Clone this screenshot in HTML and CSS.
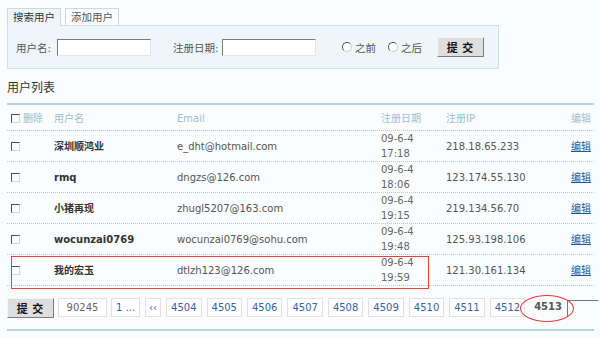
FILE: index.html
```html
<!DOCTYPE html>
<html lang="zh-CN">
<head>
    <meta charset="UTF-8">
    <title>用户管理</title>
    <link rel="stylesheet" href="styles.css">
</head>
<body>

<div class="tabs">
    <span class="tab active">搜索用户</span>
    <span class="tab">添加用户</span>
</div>

<form class="search-panel">
    <label class="lbl lbl-name">用户名:</label>
    <input type="text" class="txt">
    <label class="lbl lbl-date">注册日期:</label>
    <input type="text" class="txt">
    <span class="radio r-before"><i></i>之前</span>
    <span class="radio r-after"><i></i>之后</span>
    <button type="button" class="btn">提 交</button>
</form>

<h2 class="list-title">用户列表</h2>

<div class="user-list">
    <div class="row head">
        <div class="c-check"><span class="box"></span>删除</div>
        <div>用户名</div>
        <div>Email</div>
        <div>注册日期</div>
        <div>注册IP</div>
        <div class="c-edit">编辑</div>
    </div>
    <div class="row">
        <div class="c-check"><span class="box"></span></div>
        <div class="c-name">深圳顺鸿业</div>
        <div class="c-mail">e_dht@hotmail.com</div>
        <div class="c-date">09-6-4<br>17:18</div>
        <div class="c-ip">218.18.65.233</div>
        <div class="c-edit"><a href="#">编辑</a></div>
    </div>
    <div class="row">
        <div class="c-check"><span class="box"></span></div>
        <div class="c-name">rmq</div>
        <div class="c-mail">dngzs@126.com</div>
        <div class="c-date">09-6-4<br>18:06</div>
        <div class="c-ip">123.174.55.130</div>
        <div class="c-edit"><a href="#">编辑</a></div>
    </div>
    <div class="row">
        <div class="c-check"><span class="box"></span></div>
        <div class="c-name">小猪再现</div>
        <div class="c-mail">zhugl5207@163.com</div>
        <div class="c-date">09-6-4<br>19:15</div>
        <div class="c-ip">219.134.56.70</div>
        <div class="c-edit"><a href="#">编辑</a></div>
    </div>
    <div class="row">
        <div class="c-check"><span class="box"></span></div>
        <div class="c-name">wocunzai0769</div>
        <div class="c-mail">wocunzai0769@sohu.com</div>
        <div class="c-date">09-6-4<br>19:48</div>
        <div class="c-ip">125.93.198.106</div>
        <div class="c-edit"><a href="#">编辑</a></div>
    </div>
    <div class="row marked">
        <div class="c-check"><span class="box"></span></div>
        <div class="c-name">我的宏玉</div>
        <div class="c-mail">dtlzh123@126.com</div>
        <div class="c-date">09-6-4<br>19:59</div>
        <div class="c-ip">121.30.161.134</div>
        <div class="c-edit"><a href="#">编辑</a></div>
        <span class="red-box"></span>
    </div>
</div>

<div class="pager">
    <button type="button" class="btn">提 交</button>
    <span class="pg total">90245</span>
    <span class="pg">1 ...</span>
    <span class="pg prev">‹‹</span>
    <span class="pg">4504</span>
    <span class="pg">4505</span>
    <span class="pg">4506</span>
    <span class="pg">4507</span>
    <span class="pg">4508</span>
    <span class="pg">4509</span>
    <span class="pg">4510</span>
    <span class="pg">4511</span>
    <span class="pg">4512</span>
    <span class="pg current">4513<span class="red-ring"></span></span>
    <input type="text" class="pg-input">
</div>

<div class="bottom-line"></div>

</body>
</html>
```

FILE: styles.css
```css
body {
    margin: 0;
    padding: 8px 6px 0 7px;
    background-color: #fafcfd;
    font-family: "DejaVu Sans", "Noto Sans CJK SC", sans-serif;
    color: #333;
    overflow: hidden;
}

/* tabs */
.tabs {
    display: flex;
    gap: 4px;
    height: 17px;
}

.tab {
    display: block;
    height: 17px;
    padding: 0 5px;
    border: 1px solid #c8dbe4;
    border-bottom: none;
    box-sizing: border-box;
    font-size: 10.5px;
    line-height: 16px;
    color: #555;
    background: #fafcfd;
}

.tab.active {
    background: #eef6fa;
    color: #333;
    position: relative;
    height: 18px;
    z-index: 1;
}

/* search box */
.search-panel {
    display: flex;
    align-items: center;
    width: 492px;
    height: 44px;
    box-sizing: border-box;
    border: 1px solid #cfe2eb;
    background: #eef6fa;
    padding-left: 8px;
    margin: 0;
    font-size: 10.5px;
    color: #555;
}

.lbl {
    display: block;
    width: 41px;
    white-space: nowrap;
}

.lbl-date {
    width: 49px;
    margin-left: 22px;
}

.txt {
    width: 94px;
    height: 17px;
    box-sizing: border-box;
    border: 1px solid;
    border-color: #7b7b7b #e6e6e6 #e6e6e6 #7b7b7b;
    background: #fff;
    padding: 0;
    margin: 0;
}

.radio {
    display: flex;
    align-items: center;
    gap: 3px;
    color: #555;
}

.radio i {
    display: block;
    width: 8px;
    height: 8px;
    border: 1px solid;
    border-color: #555 #ccc #ccc #555;
    border-radius: 50%;
    background: #fff;
}

.r-before {
    margin-left: 26px;
}

.r-after {
    margin-left: 12px;
}

.btn {
    flex-shrink: 0;
    width: 47px;
    height: 20px;
    margin-left: 15px;
    padding: 0;
    border: 1px solid;
    border-color: #f5f5f5 #7d7d7d #7d7d7d #f5f5f5;
    background: #dedede;
    font-family: "Noto Sans CJK SC", sans-serif;
    font-size: 11px;
    font-weight: bold;
    color: #111;
    letter-spacing: 1px;
    white-space: nowrap;
}

/* list */
.list-title {
    margin: 11px 0 0;
    font-size: 12px;
    line-height: 16px;
    font-weight: normal;
    color: #333;
}

.user-list {
    margin-top: 7px;
    border-top: 2px solid #b5d3e1;
    width: 587px;
}

.row {
    display: grid;
    grid-template-columns: 43px 123px 204px 65px 1fr auto;
    align-items: center;
    height: 31px;
    box-sizing: border-box;
    padding: 0 3px 0 4px;
    border-bottom: 1px dotted #c4c4c4;
    font-size: 10px;
    line-height: 15px;
    color: #555;
}

.row.head {
    height: 26px;
    padding-top: 1px;
    color: #9dbfd1;
}

.c-check {
    display: flex;
    align-items: center;
    gap: 3px;
}

.box {
    display: block;
    width: 9px;
    height: 9px;
    box-sizing: border-box;
    border: 1px solid;
    border-color: #4d4d4d #d5d5d5 #d5d5d5 #4d4d4d;
    background: #fff;
}

.c-name {
    font-weight: bold;
    color: #333;
}

.c-date {
    color: #666;
}

.c-edit {
    text-align: right;
}

.c-edit a {
    color: #1d5a9b;
}

.marked {
    position: relative;
}

.red-box {
    position: absolute;
    left: 4px;
    top: 1px;
    width: 418px;
    height: 33px;
    box-sizing: border-box;
    border: 1px solid #f03c3c;
}

/* pager */
.pager {
    display: flex;
    align-items: center;
    margin-top: 11px;
    height: 21px;
    font-size: 10px;
    white-space: nowrap;
}

.pager .btn {
    margin-left: 0;
    margin-right: 4px;
}

.pg {
    display: block;
    flex-shrink: 0;
    height: 19px;
    line-height: 17px;
    box-sizing: border-box;
    padding: 0 4px;
    margin-right: 5px;
    border: 1px solid #e1e1e1;
    background: #fff;
    color: #3762a6;
}

.pg.total {
    width: 49px;
    text-align: center;
    color: #666;
    margin-right: 4px;
}

.pg.prev {
    padding: 0 3px;
}

.pg.current {
    position: relative;
    border: none;
    background: none;
    color: #555;
    font-weight: bold;
    padding: 0 5px 0 4px;
    margin-right: 0;
}

.red-ring {
    position: absolute;
    left: -10px;
    top: -3px;
    width: 54px;
    height: 27px;
    box-sizing: border-box;
    border: 1px solid #e83a3a;
    border-radius: 50%;
}

.pg-input {
    flex-shrink: 0;
    width: 32px;
    height: 17px;
    margin: 2px 0 0 0;
    padding: 0;
    box-sizing: border-box;
    border: 1px solid;
    border-color: #777 #fafcfd #fafcfd #777;
    background: #fafcfd;
}

.bottom-line {
    margin-top: 11px;
    width: 587px;
    border-top: 2px solid #b5d3e1;
}
```
